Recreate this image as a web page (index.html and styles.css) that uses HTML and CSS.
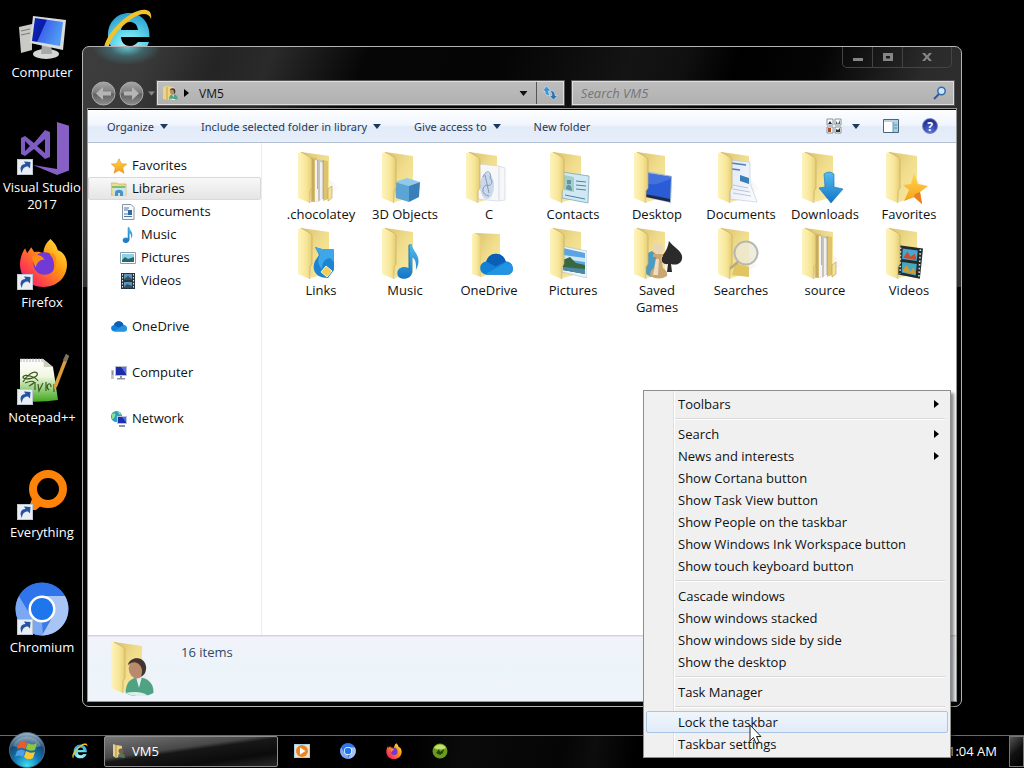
FILE: index.html
```html
<!DOCTYPE html>
<html lang="en">
<head>
    <meta charset="UTF-8">
    <meta name="viewport" content="width=device-width, initial-scale=1.0">
    <title>VM5</title>
    <link rel="stylesheet" href="styles.css">
</head>
<body>
    <!-- Shared icon shapes -->
    <svg class="sprite" aria-hidden="true">
        <defs>
            <linearGradient id="gFront" x1="0" x2="1"><stop offset="0" stop-color="#fdf3bd"/><stop offset=".6" stop-color="#f7e697"/><stop offset="1" stop-color="#e6cc74"/></linearGradient>
            <linearGradient id="gBack" x1="0" y1="0" x2="1" y2="1"><stop offset="0" stop-color="#d9c170"/><stop offset=".5" stop-color="#f1de8c"/><stop offset="1" stop-color="#f8eaa8"/></linearGradient>
            <linearGradient id="gBlue" x1="0" y1="0" x2="0" y2="1"><stop offset="0" stop-color="#52bdf2"/><stop offset="1" stop-color="#1475c4"/></linearGradient>
            <linearGradient id="gScreen" x1="0" x2="1" y2=".4"><stop offset="0" stop-color="#0c2bc0"/><stop offset=".42" stop-color="#0a1ca6"/><stop offset=".45" stop-color="#3d67ea"/><stop offset="1" stop-color="#4f9bf5"/></linearGradient>
            <linearGradient id="gStar" x1="0" y1="0" x2="0" y2="1"><stop offset="0" stop-color="#ffd94e"/><stop offset="1" stop-color="#f59a15"/></linearGradient>
            <linearGradient id="gFox" x1="1" y1="0" x2="0" y2="1"><stop offset="0" stop-color="#fff44f"/><stop offset=".4" stop-color="#ff980e"/><stop offset=".75" stop-color="#ff3b50"/><stop offset="1" stop-color="#e31587"/></linearGradient>
            <linearGradient id="gNote" x1="0" y1="0" x2="0" y2="1"><stop offset="0" stop-color="#fff"/><stop offset=".4" stop-color="#f2f7e2"/><stop offset="1" stop-color="#3fa81c"/></linearGradient>
            <radialGradient id="gIe" cx=".5" cy=".8" r=".8"><stop offset="0" stop-color="#b6fbff"/><stop offset=".5" stop-color="#5fd6ea"/><stop offset="1" stop-color="#2a9dd0"/></radialGradient>
            <radialGradient id="gOrb" cx=".5" cy=".95" r=".95"><stop offset="0" stop-color="#3de0f5"/><stop offset=".4" stop-color="#1279b5"/><stop offset=".7" stop-color="#174a75"/><stop offset="1" stop-color="#a9bccb"/></radialGradient>
            <linearGradient id="gNav" x1="0" y1="0" x2="0" y2="1"><stop offset="0" stop-color="#a6a6a6"/><stop offset=".48" stop-color="#7b7b7b"/><stop offset=".52" stop-color="#606060"/><stop offset="1" stop-color="#8d8d8d"/></linearGradient>
            <linearGradient id="gPaper" x1="0" x2="1" y2="1"><stop offset="0" stop-color="#dfe8f6"/><stop offset="1" stop-color="#fbfcfe"/></linearGradient>
            <linearGradient id="gShade" x1="0" x2="1"><stop offset="0" stop-color="#ccc" stop-opacity=".7"/><stop offset="1" stop-color="#ddd" stop-opacity="0"/></linearGradient>

            <symbol id="back" viewBox="0 0 52 54">
                <path d="M16 50 46 38 34 28z" fill="url(#gShade)"/>
                <path d="M6 1 34 5V46L16 51z" fill="url(#gBack)"/>
            </symbol>
            <symbol id="front" viewBox="0 0 52 54">
                <path d="M3 2 6 1 15 6Q17 7 17 9V37L15 40V52L3 47z" fill="url(#gFront)"/>
                <path d="M6 1 15 6Q17 7 17 9V37L15 40V52" fill="none" stroke="#c9ad5c" stroke-width=".7"/>
            </symbol>
            <symbol id="files" viewBox="0 0 52 54">
                <path d="M16 6 22 7V51H16z" fill="#d8bd70"/><path d="M20 9 24 10V50L20 51z" fill="#f4f4f4"/>
                <path d="M23 8 28 10V47L23 51z" fill="#c8c4b8"/><path d="M25 11 29 12V47L25 49z" fill="#eef0f4"/>
                <path d="M28 9 33 10V48L28 50z" fill="#ddc36b"/><path d="M33 38 37 35V47L33 50z" fill="#f3e39b" stroke="#b99b48" stroke-width=".6"/>
                <path d="M18 8V50M22.500 9V38M28 9V48" stroke="#9a8650" stroke-width=".6"/>
            </symbol>
            <symbol id="shortcut" viewBox="0 0 16 16">
                <rect width="16" height="16" fill="#e9edf4"/><rect x=".5" y=".5" width="15" height="15" fill="none" stroke="#bfc7d3"/>
                <path d="M5 14C2 9 4 5 8.500 5L7 2.500 13.500 3 13 9.500 11 7.500C7 7.500 5 10 5 14z" fill="#24549f"/>
            </symbol>
            <symbol id="ie" viewBox="0 0 50 50">
                <path fill-rule="evenodd" d="M26 5C38 5 47 14 46.500 29H18C18.500 35 22 38 27 38 31 38 33 36 35 34H46C43 43 36 48 26 48 14 48 5 39 5 27 5 14 14 5 26 5zM18 22H35C34 16 31 14 27 14 22 14 19 17 18 22z" fill="url(#gIe)"/>
                <path d="M2 46C-3 36 12 16 28 6 38 0 50-1 48 11 46 5 39 4 30 10 16 19 4 34 5 46z" fill="#f2c22c"/>
            </symbol>
            <symbol id="fox" viewBox="0 0 48 48">
                <path d="M31 1C35 5 37 8 38 12 43 13 47 19 47 26 47 39 37 48 24 48 10 48 1 38 1 26 1 20 3 14 6 10L8 15 12 9 15 14C18 13 21 14 24 15 24 9 27 4 31 1z" fill="url(#gFox)"/>
                <circle cx="25" cy="25" r="11" fill="#7139d6"/>
                <path d="M13 18C18 15 23 18 25 21 20 21 18 24 16 29 15 25 13 22 13 18zM33 15C38 19 38 27 33 34 36 26 34 20 30 16z" fill="#ff8a16"/>
            </symbol>
            <symbol id="chromium" viewBox="0 0 54 54">
                <circle cx="27" cy="27" r="26.500" fill="#3b7ae0"/>
                <path d="M27 14H50A26.500 26.500 0 0 1 27 53.500L38 34z" fill="#a9c5f6"/>
                <path d="M4 14 16 34 27 40 28 53.500A26.500 26.500 0 0 1 4 14z" fill="#7ba8f2"/>
                <path d="M4 14A26.500 26.500 0 0 1 50 14H27L15 32z" fill="#2f74ea"/>
                <circle cx="27" cy="27" r="13.500" fill="#fff"/><circle cx="27" cy="27" r="11" fill="#1f76ec"/>
            </symbol>
            <symbol id="monitor" viewBox="0 0 48 44">
                <path d="M1 11 14 8V34L3 37z" fill="#c9cac5"/><path d="M3 15 12 13M3 19 12 17" stroke="#777"/>
                <ellipse cx="28" cy="38" rx="13" ry="5" fill="#d4d6d6"/><path d="M24 28H33L34 38H23z" fill="#a5a9ac"/>
                <path d="M15 0 48 4 45 34 12 27z" fill="#d9dcdd"/><path d="M17 2 45 6 42 30 14 25z" fill="url(#gScreen)"/>
            </symbol>
            <symbol id="note" viewBox="0 0 24 36">
                <path d="M12 0 15 0C15 8 27 12 19 27 20 19 18 15 15.500 14V28C15 38 0 38 0 30 0 24 7 22 12 25z" fill="url(#gBlue)"/>
                <path d="M12 1V26" stroke="#176fae" stroke-width="1"/>
            </symbol>
            <symbol id="cloud" viewBox="0 0 32 22">
                <path d="M8 21C-2 21-2 9 6 8 9-2 22-2 25 8 34 8 34 21 26 21z" fill="#1180d8"/>
                <path d="M6 8C9-2 22-2 25 8L15 13z" fill="#0b5fb5"/><path d="M6 20 25 9C34 9 34 21 26 21H8z" fill="#2394e2"/>
            </symbol>
            <symbol id="star" viewBox="0 0 24 24">
                <path d="M12 1 15.500 8.500 23.500 9 17.500 14.500 19.500 23 12 18.500 4.500 23 6.500 14.500 .5 9 8.500 8.500z" fill="url(#gStar)" stroke="#e38a17" stroke-width=".8"/>
            </symbol>
            <symbol id="picture" viewBox="0 0 25 33">
                <path d="M0 1 25 6V33L0 27z" fill="#eef4f8" stroke="#a9bdca" stroke-width=".6"/><path d="M1 3 23 8V29L1 25z" fill="#5ba5e0"/>
                <path d="M1 10 23 13V17L1 14z" fill="#cde7f5"/><path d="M1 15 8 12 14 18 23 20V29L1 25z" fill="#37683f"/><path d="M1 22 23 24V29L1 25z" fill="#4d87a6"/>
            </symbol>
            <symbol id="film" viewBox="0 0 24 32">
                <path d="M1 0 24 3 21 32 0 28z" fill="#222b2d"/>
                <path d="M4.500 3 19 5 18 15 4 13z" fill="#4aa6cf"/><path d="M4 16 18 18 17 29 3.500 26z" fill="#48a8c0"/>
                <path d="M5 12 9 6 12 11 16 8 18 14z" fill="#c84e27"/><path d="M4 25 8 19 12 25 15 21 17 28z" fill="#d79a2d"/>
                <path d="M2.500 2 2 27M21.500 4 20 31" stroke="#dfe7e7" stroke-width="1.500" stroke-dasharray="1.500 2"/>
            </symbol>
            <symbol id="user" viewBox="0 0 28 38">
                <path d="M0 35C0 25 5 20 13 20 22 20 28 27 27 35 18 40 7 39 0 35z" fill="#4fa384"/><path d="M0 35C8 33 18 34 22 38 14 39 6 38 0 35z" fill="#d9efe7"/>
                <path d="M10 19 16 19 13 30z" fill="#e8f1ee"/><ellipse cx="11" cy="11" rx="8" ry="10" fill="#b98b6c"/>
                <path d="M2 8C4-1 19-2 20 10 20 15 18 18 15 19 18 11 14 6 9 5 6 5 4 6 2 8z" fill="#41362f"/>
            </symbol>
            <symbol id="down" viewBox="0 0 8 5"><path d="M0 0H8L4 5z" fill="currentColor"/></symbol>
        </defs>
    </svg>

    <div class="desktop">
        <nav class="desktop-icons" aria-label="Desktop">
            <a href="#"><svg viewBox="0 0 54 54"><use href="#monitor" x="3" y="9" width="48" height="44"/></svg>Computer</a>
            <a href="#"><svg viewBox="0 0 54 54"><path d="M42 0 55 4V48L42 53 18 43 42 47z" fill="#8660c4"/><path fill-rule="evenodd" d="M6 16 10 14 19 21 30 8 35 10V35L30 37 19 27 10 34 6 32zM10 19V29L15 24zM30 17 22 24 30 31z" fill="#7f5cc4"/><use href="#shortcut" x="2" y="37" width="16" height="16"/></svg>Visual Studio<br>2017</a>
            <a href="#"><svg viewBox="0 0 54 54"><use href="#fox" x="4" y="1" width="49" height="49"/><use href="#shortcut" x="2" y="37" width="16" height="16"/></svg>Firefox</a>
            <a href="#"><svg viewBox="0 0 54 54"><path d="M5 7H28L38 15 43 48Q24 51 5 49z" fill="url(#gNote)"/><path d="M28 7 29 15H38z" fill="#c9d0c0"/><path d="M6 6V10M9 6V10M12 6V10M15 6V10M18 6V10M21 6V10M24 6V10M27 6V10" stroke="#999" stroke-width=".8"/><path d="M8 30C12 23 19 18 22 21 25 26 8 29 8 25 9 21 21 25 23 29M10 31C17 28 24 29 14 34M20 38V30M23 32 24 39 28 31M31 30V39M34 38C29 34 36 28 36 35M39 32 39 40" fill="none" stroke="#3b5b22" stroke-width="1.200"/><path d="M51 2 54 4 42 35 39 37 39 33z" fill="#dd9d38"/><path d="M51 2 54 4 51 10 48 8z" fill="#77726a"/><use href="#shortcut" x="2" y="37" width="16" height="16"/></svg>Notepad++</a>
            <a href="#"><svg viewBox="0 0 54 54"><circle cx="33" cy="22" r="15" fill="none" stroke="#ff8209" stroke-width="8"/><path d="M18 29 27 38 21 43 13 43z" fill="#ff8209"/><use href="#shortcut" x="2" y="37" width="16" height="16"/></svg>Everything</a>
            <a href="#"><svg viewBox="0 0 54 54"><use href="#chromium" width="54" height="54"/><use href="#shortcut" x="2" y="37" width="16" height="16"/></svg>Chromium</a>
        </nav>
        <a href="#" class="ie-shortcut" aria-label="Internet Explorer"><svg viewBox="0 0 50 50"><use href="#ie" width="50" height="50"/></svg></a>

        <main class="window">
            <div class="caption">
                <div class="caption-buttons">
                    <button type="button" aria-label="Minimize"><svg viewBox="0 0 12 10"><path d="M1 6H11V9H1z"/></svg></button>
                    <button type="button" aria-label="Maximize"><svg viewBox="0 0 12 10"><path fill-rule="evenodd" d="M1 1H11V9H1zM4 4V6.500H8V4z"/></svg></button>
                    <button type="button" class="close" aria-label="Close"><svg viewBox="0 0 12 10"><path d="M1 1H4L6 3.500 8 1H11L7.500 5 11 9H8L6 6.500 4 9H1L4.500 5z"/></svg></button>
                </div>
            </div>
            <div class="nav-row">
                <button type="button" class="round" aria-label="Back"><svg viewBox="0 0 25 25"><circle cx="12.500" cy="12.500" r="11.500" fill="url(#gNav)" stroke="#aaa"/><path d="M5 12.500 12 6V10.500H20V14.500H12V19z" fill="#b5b5b5"/></svg></button>
                <button type="button" class="round" aria-label="Forward"><svg viewBox="0 0 25 25"><circle cx="12.500" cy="12.500" r="11.500" fill="url(#gNav)" stroke="#aaa"/><path d="M20 12.500 13 6V10.500H5V14.500H13V19z" fill="#b5b5b5"/></svg></button>
                <button type="button" class="recent" aria-label="Recent pages"><svg viewBox="0 0 8 5"><use href="#down"/></svg></button>
                <div class="address">
                    <svg class="small" viewBox="0 0 16 16"><path d="M1 2 5 1 12 2V13L5 15 1 14z" fill="#ecd582"/><path d="M5 2V15" stroke="#c1a14b"/><use href="#user" x="7" y="3" width="9" height="12"/></svg>
                    <svg class="crumb" viewBox="0 0 5 8"><path d="M0 0 5 4 0 8z"/></svg>
                    <button type="button" class="path">VM5</button>
                    <button type="button" class="drop" aria-label="Previous locations"><svg viewBox="0 0 8 5"><use href="#down"/></svg></button>
                    <button type="button" class="refresh" aria-label="Refresh"><svg viewBox="0 0 16 16"><path d="M4.500 1 9 6H6.500C6.500 8 7 9 8 10.500 4 10.500 3 9 3 6H.5z" fill="#3a97d2" stroke="#eef" stroke-width=".5"/><path d="M11.500 15 7.500 10.500H10C10 8.500 9 7 8 5.500 12 5.500 13 8 13 10.500H15.500z" fill="#2374b3" stroke="#eef" stroke-width=".5"/></svg></button>
                </div>
                <div class="search">
                    <input type="search" placeholder="Search VM5" aria-label="Search VM5">
                    <svg viewBox="0 0 14 14"><path d="M1 13 6 8" stroke="#2d5b9b" stroke-width="2"/><circle cx="8.500" cy="5" r="3.700" fill="#cfe6f7" stroke="#2f6db0" stroke-width="1.500"/></svg>
                </div>
            </div>

            <div class="client">
                <div class="toolbar">
                    <button type="button">Organize <svg viewBox="0 0 8 5"><use href="#down"/></svg></button>
                    <button type="button">Include selected folder in library <svg viewBox="0 0 8 5"><use href="#down"/></svg></button>
                    <button type="button">Give access to <svg viewBox="0 0 8 5"><use href="#down"/></svg></button>
                    <button type="button">New folder</button>
                    <div class="toolbar-right">
                        <button type="button" aria-label="Change your view"><svg class="small" viewBox="0 0 16 16"><path d="M1 1H7V7H1zM9 1H15V7H9zM1 9H7V15H1zM9 9H15V15H9z" fill="#fff" stroke="#8a929a"/><path d="M2 6 4 3 6 6z" fill="#222"/><path d="M10 3 12 6 14 2V6H10z" fill="#3a704e"/><path d="M2 10H5V14H2z" fill="#b84b20"/><path d="M10 14V11L12 12 14 10V14z" fill="#333"/></svg></button>
                        <button type="button" aria-label="More view options"><svg viewBox="0 0 8 5"><use href="#down"/></svg></button>
                        <button type="button" aria-label="Show the preview pane"><svg class="small" viewBox="0 0 16 16"><path d="M.5 1.500H15.500V14.500H.5z" fill="#fff" stroke="#4b6577"/><path d="M1 2H15V4H1z" fill="#bfd3e4"/><path d="M10 4H15V14H10z" fill="#9fd2e8"/><path d="M10 4V14M11 7H14M11 10H14" stroke="#4b7f9c" stroke-width=".8"/></svg></button>
                        <button type="button" class="help" aria-label="Get help">?</button>
                    </div>
                </div>

                <div class="panes">
                    <nav class="tree" aria-label="Folders">
                        <a href="#"><svg viewBox="0 0 16 16"><use href="#star" width="16" height="16"/></svg>Favorites</a>
                        <a href="#" class="selected"><svg viewBox="0 0 16 16"><path d="M0 2H6L7 3H15V14H0z" fill="#f0dc8a" stroke="#c1a24a" stroke-width=".6"/><path d="M1 5H14V7H1z" fill="#7fc069"/><path d="M2 7H15V14H2z" fill="#c3e5f4"/><path d="M4 15V11C5 8 11 8 12 11V15H9V12H7V15z" fill="#4c92bd"/></svg>Libraries</a>
                        <div class="branch">
                            <a href="#"><svg viewBox="0 0 16 16"><path d="M2.500 .5H11L14 3.500V15.500H2.500z" fill="#f6f9fc" stroke="#8796a5"/><path d="M4 4H9M4 6H8M4 10H8M4 12.500H12" stroke="#4e78a8"/><path d="M8 6H12V11H8z" fill="#37679b"/></svg>Documents</a>
                            <a href="#"><svg viewBox="0 0 16 16"><use href="#note" x="1" width="14" height="16"/></svg>Music</a>
                            <a href="#"><svg viewBox="0 0 16 16"><path d="M.5 2.500H15.500V13.500H.5z" fill="#fff" stroke="#8aa0ac"/><path d="M2 4H14V12H2z" fill="#8fd0e3"/><path d="M2 10 5 7 8 9 14 7V12H2z" fill="#216a72"/></svg>Pictures</a>
                            <a href="#"><svg viewBox="0 0 16 16"><path d="M1 0H15V16H1z" fill="#26343d"/><path d="M4 1H12V7H4zM4 9H12V15H4z" fill="#5e93b5"/><path d="M4 6 8 3 12 6V7H4zM4 14 7 11 12 13V15H4z" fill="#2f5163"/><path d="M2.500 1V16M13.500 1V16" stroke="#e5ecef" stroke-dasharray="1.500 1.500"/></svg>Videos</a>
                        </div>
                        <a href="#" class="root"><svg viewBox="0 0 16 16"><use href="#cloud" y="2" width="16" height="11"/></svg>OneDrive</a>
                        <a href="#" class="root"><svg viewBox="0 0 16 16"><path d="M0 5H3V14H0z" fill="#c4c7cd"/><path d="M1 7H2M1 9H2" stroke="#555"/><path d="M4 1H16V11H4z" fill="#b9bfd0"/><path d="M5 2H15V10H5z" fill="#1c2ba8"/><path d="M10 2H15V9z" fill="#5374de"/><path d="M6 13H14V14.500H6zM9 11H11V13H9z" fill="#8c91a6"/></svg>Computer</a>
                        <a href="#" class="root"><svg viewBox="0 0 16 16"><circle cx="5.500" cy="5.500" r="5.500" fill="#2c9ec9"/><path d="M1 3C4 1 5 3 4 5S3 8 1 8zM6 0C8 1 7 4 10 4L9 1z" fill="#8fe08b"/><path d="M6 5H16V13H6z" fill="#bcc5d8"/><path d="M7 6H15V12H7z" fill="#1b2fb0"/><path d="M11 6H15V11z" fill="#4e72de"/><path d="M8 14H14V16H8z" fill="#8c93a8"/></svg>Network</a>
                    </nav>

                    <div class="files">
                        <a href="#"><svg viewBox="0 0 52 54"><use href="#back"/><use href="#files"/><use href="#front"/></svg>.chocolatey</a>
                        <a href="#"><svg viewBox="0 0 52 54"><use href="#back"/><path d="M16 31 28 27 41 31 30 35z" fill="#8fc9ec"/><path d="M16 31 30 35V51L17 47z" fill="#5ba5d6"/><path d="M30 35 41 31 40 46 30 51z" fill="#3a80b8"/><use href="#front"/></svg>3D Objects</a>
                        <a href="#"><svg viewBox="0 0 52 54"><use href="#back"/><path d="M15 13 36 15 42 17V49L34 50 15 48z" fill="#f6f7f9" stroke="#cfd5dc" stroke-width=".7"/><path d="M36 15V49" stroke="#d5d9df"/><ellipse cx="24" cy="35" rx="7" ry="13" fill="#cbd8ea"/><path d="M20 26C23 18 29 20 27 27 31 31 28 36 23 34 18 37 19 44 26 45M22 24 26 42" fill="none" stroke="#8199bf"/><use href="#front"/></svg>C</a>
                        <a href="#"><svg viewBox="0 0 52 54"><use href="#back"/><path d="M15 21 42 25 41 52 15 47z" fill="#cfe8f4" stroke="#7fa7b8" stroke-width=".8"/><path d="M17 24 27 26V41L17 39z" fill="#a5cdc9"/><path d="M19 38C19 32 25 32 25 40M20 29H24V33H20z" fill="#5f94a5"/><path d="M29 30 39 31M29 34 39 35M29 38 39 39M18 44 38 48" stroke="#4d83a6"/><use href="#front"/></svg>Contacts</a>
                        <a href="#"><svg viewBox="0 0 52 54"><use href="#back"/><path d="M14 20 41 25 40 52 14 46z" fill="#9fb6d2"/><path d="M15 22 40 26 39 49 15 43z" fill="#2a5cd5"/><path d="M15 32C25 36 32 30 40 28V26L15 22z" fill="#4272df"/><path d="M15 43 39 48V51L15 46z" fill="#1c2a48"/><use href="#front"/></svg>Desktop</a>
                        <a href="#"><svg viewBox="0 0 52 54"><use href="#back"/><path d="M15 9 35 11V32L42 51 15 48z" fill="url(#gPaper)" stroke="#b9c7dc" stroke-width=".6"/><path d="M16 12 31 14M17 18 25 19" stroke="#4c7ec3" stroke-width="1.500"/><path d="M25 24 34 27V33L25 30z" fill="#3a80b7"/><path d="M18 34 33 37M18 38 35 41M18 42 36 45" stroke="#bac6dc"/><use href="#front"/></svg>Documents</a>
                        <a href="#"><svg viewBox="0 0 52 54"><use href="#back"/><path d="M25 23Q30 19 35 23V36L44 38 32 52 20 37 26 36z" fill="url(#gBlue)" stroke="#1370b5" stroke-width=".6"/><use href="#front"/></svg>Downloads</a>
                        <a href="#"><svg viewBox="0 0 52 54"><use href="#back"/><path d="M31 22 35 33 45 35 37 41 39 53 31 46 21 50 26 39 20 34 28 33z" fill="url(#gStar)"/><path d="M37 41 39 53 31 46 32 43z" fill="#ed7f23"/><use href="#front"/></svg>Favorites</a>
                        <a href="#"><svg viewBox="0 0 52 54"><use href="#back"/><path d="M20 20 27 22 39 22V43L33 51C21 51 16 43 20 34L24 28z" fill="#1d84d2"/><path d="M20 20 27 22 39 22V35L35 31C29 32 27 36 27 42 23 38 22 33 25 28z" fill="#3ea7ea"/><path d="M31 39 37 44 32 50 26 45z" fill="#f9cc52" stroke="#fff3c5"/><use href="#front"/></svg>Links</a>
                        <a href="#"><svg viewBox="0 0 52 54"><use href="#back"/><use href="#note" x="18" y="17" width="24" height="35"/><use href="#front"/></svg>Music</a>
                        <a href="#"><svg viewBox="0 0 52 54"><path d="M12 6 37 7V44L18 50z" fill="url(#gBack)"/><path d="M9 7 12 6 18 10V50L9 47z" fill="url(#gFront)"/><use href="#cloud" x="17" y="26" width="33" height="23"/></svg>OneDrive</a>
                        <a href="#"><svg viewBox="0 0 52 54"><use href="#back"/><use href="#picture" x="15" y="18" width="25" height="33"/><use href="#front"/></svg>Pictures</a>
                        <a href="#"><svg viewBox="0 0 52 54"><use href="#back"/><path d="M15 27 21 24 27 29V44L20 50 15 47z" fill="#4b9bc2"/><path d="M38 14C42 20 50 23 51 29 52 36 46 39 40 37L41 45H36L37 37C31 38 29 33 32 28 35 24 37 20 38 14z" fill="#2d2a2c"/><circle cx="27" cy="21" r="5.500" fill="#e9d7b4"/><path d="M22 27H32V30H30L32 41Q37 44 36 49 28 54 19 49 19 43 23 41L25 30H22z" fill="#c9a674"/><path d="M25 32H28L27 48H22z" fill="#eddcbd"/><use href="#front"/></svg>Saved Games</a>
                        <a href="#"><svg viewBox="0 0 52 54"><use href="#back"/><path d="M20 36 34 40V50L17 48z" fill="#e0c561"/><circle cx="31" cy="26" r="11.500" fill="#eee9d4" fill-opacity=".8" stroke="#b3b8b7" stroke-width="2"/><path d="M23 35 12 44" stroke="#b6aa82" stroke-width="2.500"/><use href="#front"/></svg>Searches</a>
                        <a href="#"><svg viewBox="0 0 52 54"><use href="#back"/><use href="#files"/><use href="#front"/></svg>source</a>
                        <a href="#"><svg viewBox="0 0 52 54"><use href="#back"/><use href="#film" x="15" y="18" width="25" height="34"/><use href="#front"/></svg>Videos</a>
                    </div>
                </div>

                <footer class="details">
                    <svg viewBox="0 0 52 58"><use href="#back" width="52" height="56"/><use href="#front" width="52" height="56"/><use href="#user" x="17" y="17" width="30" height="39"/></svg>
                    <span>16 items</span>
                </footer>
            </div>
        </main>

        <footer class="taskbar">
            <button type="button" class="start" aria-label="Start"><svg viewBox="0 0 36 36"><circle cx="18" cy="18" r="17.500" fill="url(#gOrb)" stroke="#4c6c80"/><path d="M4 14A15 15 0 0 1 32 14Q18 19 4 14z" fill="#fff" fill-opacity=".25"/><path d="M10 11Q14 8 18 11L16 17Q13 15 8 17z" fill="#ee5a24"/><path d="M19 11Q23 14 28 11L26 18Q21 20 17 17z" fill="#8dc63f"/><path d="M8 19Q12 16 16 19L14 25Q10 22 6 25z" fill="#4f9fe8"/><path d="M17 19Q21 22 26 20L24 26Q19 29 15 25z" fill="#fdc82f"/></svg></button>
            <a href="#" class="quick" aria-label="Internet Explorer"><svg class="small" viewBox="0 0 50 50"><use href="#ie"/></svg></a>
            <button type="button" class="task"><svg viewBox="0 0 16 16"><path d="M2 1 5 2 11 3V13L5 15 2 13z" fill="#e8d183"/><path d="M5 2V15" stroke="#a98f46"/><path d="M7 14C7 8 14 9 14 15z" fill="#57755e"/><circle cx="10" cy="8" r="2.500" fill="#7a5d4b"/></svg>VM5</button>
            <a href="#" class="quick" aria-label="Media Player"><svg class="small" viewBox="0 0 16 16"><path d="M0 1H16V15H0z" fill="#a9d4e4"/><path d="M1 2H15V14H1z" fill="#f1e2cf"/><circle cx="8" cy="8" r="6" fill="#e98727"/><path d="M6 4.500 11.500 8 6 11.500z" fill="#fff"/></svg></a>
            <a href="#" class="quick" aria-label="Chromium"><svg class="small" viewBox="0 0 54 54"><use href="#chromium"/></svg></a>
            <a href="#" class="quick" aria-label="Firefox"><svg class="small" viewBox="0 0 48 48"><use href="#fox"/></svg></a>
            <a href="#" class="quick" aria-label="Updater"><svg class="small" viewBox="0 0 16 16"><circle cx="8" cy="8" r="7.500" fill="#6a9c1b"/><path d="M2 5A7 7 0 0 1 14 5Q8 8 2 5z" fill="#c5df6e"/><path d="M4 10 7 6 8 9 12 6 11 10 8 12z" fill="#27430c"/></svg></a>
            <time class="clock">11:04 AM</time>
            <button type="button" class="show-desktop" aria-label="Show desktop"></button>
        </footer>

        <div class="menu" role="menu">
            <button type="button" role="menuitem" class="sub">Toolbars</button>
            <hr>
            <button type="button" role="menuitem" class="sub">Search</button>
            <button type="button" role="menuitem" class="sub">News and interests</button>
            <button type="button" role="menuitem">Show Cortana button</button>
            <button type="button" role="menuitem">Show Task View button</button>
            <button type="button" role="menuitem">Show People on the taskbar</button>
            <button type="button" role="menuitem">Show Windows Ink Workspace button</button>
            <button type="button" role="menuitem">Show touch keyboard button</button>
            <hr>
            <button type="button" role="menuitem">Cascade windows</button>
            <button type="button" role="menuitem">Show windows stacked</button>
            <button type="button" role="menuitem">Show windows side by side</button>
            <button type="button" role="menuitem">Show the desktop</button>
            <hr>
            <button type="button" role="menuitem">Task Manager</button>
            <hr>
            <button type="button" role="menuitem" class="hover">Lock the taskbar
                <svg class="cursor" viewBox="0 0 13 21"><path d="M1 1V17L4.500 13.500 7 19.500 10 18 7.500 12.500H12z" fill="#fff" stroke="#222"/></svg>
            </button>
            <button type="button" role="menuitem">Taskbar settings</button>
        </div>
    </div>
</body>
</html>
```
FILE: styles.css
```css
* {
    box-sizing: border-box;
}
body {
    margin: 0;
    background: #000;
    font-family: "Open Sans", "Noto Sans", sans-serif;
    font-size: 13px;
    line-height: 17px;
    color: #111;
}
a {
    color: inherit;
    text-decoration: none;
}
button {
    margin: 0;
    padding: 0;
    border: 0;
    background: none;
    font: inherit;
    color: inherit;
}
svg {
    display: block;
    flex: none;
}
.small {
    width: 16px;
    height: 16px;
}
.sprite {
    position: absolute;
    width: 0;
    height: 0;
}
.desktop {
    position: relative;
    display: flex;
    flex-direction: column;
    height: 100vh;
    overflow: hidden;
}

/* Desktop icons */
.desktop-icons {
    flex: 1;
    display: flex;
    flex-direction: column;
    width: 84px;
    padding-top: 7px;
    color: #fff;
    text-align: center;
}
.desktop-icons a {
    height: 115px;
    white-space: nowrap;
}
.desktop-icons svg {
    width: 54px;
    height: 54px;
    margin: 0 auto 3px;
}
.ie-shortcut {
    position: absolute;
    left: 103px;
    top: 8px;
}
.ie-shortcut svg {
    width: 50px;
    height: 50px;
}

/* Explorer window */
.window {
    position: absolute;
    top: 46px;
    left: 82px;
    right: 62px;
    bottom: 61px;
    display: flex;
    flex-direction: column;
    padding: 0 4px 4px;
    border: 1px solid #b4b4b4;
    border-radius: 7px;
    background:
        radial-gradient(ellipse 34px 18px at 44px 0, rgba(110, 214, 224, 0.9), rgba(70, 140, 150, 0.5) 50%, transparent),
        linear-gradient(110deg, #3d3d3d 0, #3a3a3a 60px, #242424 130px, #2a2a2a 180px, #060606 270px, #050505 400px, #141414 520px, #101010 570px, #000 620px, #050505 700px, #2b2b2b 800px, #303030 880px) no-repeat 0 0 / 100% 240px,
        #050505;
}
.caption {
    display: flex;
    justify-content: flex-end;
    height: 33px;
    padding-right: 5px;
}
.caption-buttons {
    display: flex;
    height: 21px;
    border: 1px solid #444;
    border-top: 0;
    border-radius: 0 0 5px 5px;
}
.caption-buttons button {
    display: flex;
    justify-content: center;
    align-items: center;
    width: 30px;
    border-right: 1px solid #444;
}
.caption-buttons .close {
    width: 48px;
    border: 0;
}
.caption-buttons svg {
    width: 12px;
    height: 10px;
    fill: #858585;
}
.nav-row {
    display: flex;
    align-items: center;
    height: 26px;
    margin-bottom: 2px;
    padding: 0 2px 0 4px;
}
.round {
    margin-right: 3px;
}
.round svg {
    width: 25px;
    height: 25px;
}
.recent {
    padding: 0 1px;
    color: #888;
}
.recent svg {
    width: 7px;
    height: 5px;
}
.address, .search {
    display: flex;
    align-items: center;
    height: 26px;
    border: 2px solid #dedede;
    outline: 1px solid #555;
    outline-offset: -1px;
    background: linear-gradient(#bdbdbd, #b1b1b1);
}
.address {
    flex: 416 0 0;
    margin-right: 6px;
    padding-left: 4px;
}
.crumb {
    width: 5px;
    height: 8px;
    margin: 0 10px 0 6px;
}
.path {
    flex: 1;
    text-align: left;
    font-size: 12px;
}
.drop {
    margin-right: 8px;
}
.drop svg {
    width: 9px;
    height: 5px;
}
.refresh {
    align-self: stretch;
    padding: 0 5px;
    border-left: 1px solid #555;
}
.refresh svg {
    width: 16px;
    height: 16px;
}
.search {
    flex: 380 0 0;
    padding: 0 6px 0 8px;
}
.search input {
    flex: 1;
    min-width: 0;
    padding: 0;
    border: 0;
    background: none;
    font: italic 13px "Open Sans", "Noto Sans", sans-serif;
}
.search input::placeholder {
    color: #757575;
}
.search svg {
    width: 14px;
    height: 14px;
}
.client {
    flex: 1;
    display: flex;
    flex-direction: column;
    min-height: 0;
    border: 1px solid #999;
    background: #fff;
}
.toolbar {
    display: flex;
    align-items: center;
    height: 34px;
    padding: 0 18px 0 19px;
    border-top: 1px solid #000;
    border-bottom: 1px solid #b3bfd3;
    background: linear-gradient(#fdfeff, #f0f5fd 48%, #e2ebf8 52%, #e6eefa);
    color: #1e395b;
    font-family: "Noto Sans", "Open Sans", sans-serif;
    font-size: 11px;
}
.toolbar button {
    display: flex;
    align-items: center;
    gap: 6px;
    margin-right: 33px;
}
.toolbar svg {
    width: 8px;
    height: 5px;
}
.toolbar .small {
    width: 16px;
    height: 16px;
}
.toolbar-right {
    display: flex;
    align-items: center;
    gap: 23px;
    margin-left: auto;
}
.toolbar-right button {
    margin: 0;
}
.toolbar-right button:first-child {
    margin-right: -13px;
}
.toolbar-right .help {
    justify-content: center;
    width: 16px;
    height: 16px;
    border: 1px solid #7985bf;
    border-radius: 50%;
    background: radial-gradient(circle at 50% 90%, #5d77d8, #24359b 70%);
    color: #fff;
    font-size: 12px;
    font-weight: bold;
}
.panes {
    flex: 1;
    display: flex;
    min-height: 0;
}
.tree {
    width: 174px;
    padding: 11px 0;
    border-right: 1px solid #e9edf3;
}
.tree a {
    display: flex;
    align-items: center;
    gap: 5px;
    height: 23px;
    padding-left: 22px;
    border: 1px solid transparent;
}
.tree svg {
    width: 16px;
    height: 16px;
}
.tree .selected {
    border-color: #d9d9d9;
    border-radius: 2px;
    background: linear-gradient(#f8f8f8, #e5e5e5);
}
.branch a {
    padding-left: 31px;
}
.tree .root {
    margin-top: 23px;
}
.files {
    flex: 1;
    display: grid;
    grid-template-columns: repeat(auto-fill, 84px);
    grid-auto-rows: 76px;
    padding: 8px 0 0 17px;
}
.files a {
    padding: 0 8px;
    text-align: center;
    display: flex;
    flex-direction: column;
    align-items: center;
}
.files svg {
    width: 52px;
    height: 54px;
    margin-bottom: 1px;
}
.details {
    display: flex;
    height: 66px;
    padding: 4px 20px;
    border-top: 1px solid #cfd4e0;
    background: linear-gradient(#f2f2fa, #edf4f9 40%, #eff4fa);
    box-shadow: inset 0 1px #e2e3ee;
    color: #2e4a66;
}
.details svg {
    width: 52px;
    height: 58px;
}
.details span {
    margin: 4px 0 0 21px;
}

/* Taskbar */
.taskbar {
    display: flex;
    align-items: center;
    height: 33px;
    padding-bottom: 2px;
    border-top: 1px solid #6b6b6b;
    background: linear-gradient(100deg, #000 40%, #0a0a0a 45%, #050505 55%, #0d0d0d 58%, #000 62%);
    color: #fff;
}
.start {
    margin: -3px 18px 0 9px;
}
.start svg {
    width: 36px;
    height: 36px;
}
.quick {
    padding: 0 15px;
}
.quick:nth-child(2) {
    padding: 0 16px 0 9px;
}
.task {
    display: flex;
    align-items: center;
    gap: 5px;
    width: 174px;
    height: 31px;
    margin-right: 1px;
    padding-left: 6px;
    border: 1px solid #8d8d8d;
    border-radius: 2px;
    background: linear-gradient(172deg, #777 0, #484848 40%, #171717 48%, #0b0b0b 75%, #2a2a2a);
}
.task svg {
    width: 16px;
    height: 16px;
}
.clock {
    margin: 0 12px 0 auto;
}
.show-desktop {
    width: 15px;
    height: 31px;
    border: 1px solid #777;
    background: linear-gradient(135deg, #555, #111 50%, #000);
}

/* Context menu */
.menu {
    position: absolute;
    right: 73px;
    bottom: 10px;
    width: 308px;
    padding: 2px;
    border: 1px solid #8e8e8e;
    background: linear-gradient(90deg, transparent 29px, #e0e0e0 29px, #e0e0e0 30px, #fff 30px, #fff 31px, transparent 31px) #f0f0f0;
    box-shadow: 3px 3px 3px rgba(0, 0, 0, 0.45);
}
.menu button {
    position: relative;
    display: flex;
    align-items: center;
    justify-content: space-between;
    width: 100%;
    height: 22px;
    padding: 0 8px 0 31px;
    border: 1px solid transparent;
}
.menu .sub::after {
    content: "";
    border: 4px solid transparent;
    border-left: 5px solid #000;
    border-right: 0;
}
.menu .hover {
    border-color: #a9c5e4;
    border-radius: 2px;
    background: linear-gradient(#f0f5fb, #e1ecf9);
}
.menu hr {
    height: 8px;
    margin: 0 3px 0 29px;
    border: 0;
    background: linear-gradient(transparent 3px, #d9d9d9 3px, #d9d9d9 4px, #fff 4px, #fff 5px, transparent 5px);
}
.cursor {
    position: absolute;
    left: 102px;
    top: 12px;
    width: 13px;
    height: 21px;
    z-index: 1;
}
```
